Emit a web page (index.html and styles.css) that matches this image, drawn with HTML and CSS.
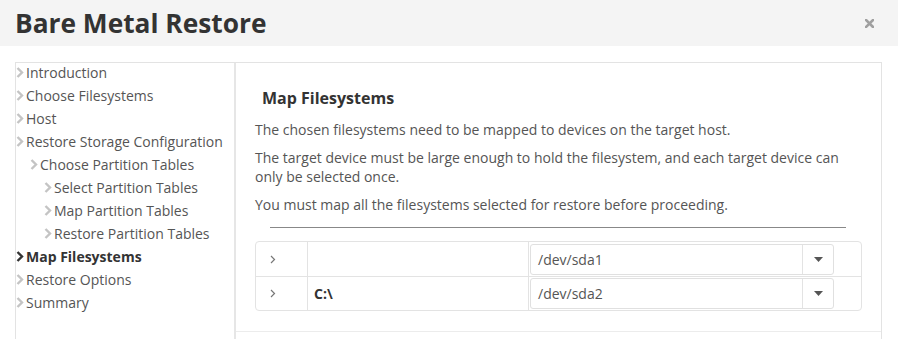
FILE: index.html
```html
<!DOCTYPE html>
<html>
<head>
<meta charset="utf-8">
<link rel="stylesheet" href="styles.css">
</head>
<body>
<div class="header">
  <h1 class="title">Bare Metal Restore</h1>
  <span class="close"><svg width="9" height="9" viewBox="0 0 9 9"><path d="M1 1L8 8M8 1L1 8" stroke="#a0a0a0" stroke-width="2.6" stroke-linecap="square"/></svg></span>
</div>
<div class="frame">
  <ul class="nav">
    <li class="lvl1"><span class="chev"><svg width="8" height="11" viewBox="0 0 8 11"><path d="M1.5 1L6 5.5L1.5 10" fill="none" stroke="currentColor" stroke-width="2.4"/></svg></span>Introduction</li>
    <li class="lvl1"><span class="chev"><svg width="8" height="11" viewBox="0 0 8 11"><path d="M1.5 1L6 5.5L1.5 10" fill="none" stroke="currentColor" stroke-width="2.4"/></svg></span>Choose Filesystems</li>
    <li class="lvl1"><span class="chev"><svg width="8" height="11" viewBox="0 0 8 11"><path d="M1.5 1L6 5.5L1.5 10" fill="none" stroke="currentColor" stroke-width="2.4"/></svg></span>Host</li>
    <li class="lvl1"><span class="chev"><svg width="8" height="11" viewBox="0 0 8 11"><path d="M1.5 1L6 5.5L1.5 10" fill="none" stroke="currentColor" stroke-width="2.4"/></svg></span>Restore Storage Configuration</li>
    <li class="lvl2"><span class="chev"><svg width="8" height="11" viewBox="0 0 8 11"><path d="M1.5 1L6 5.5L1.5 10" fill="none" stroke="currentColor" stroke-width="2.4"/></svg></span>Choose Partition Tables</li>
    <li class="lvl3"><span class="chev"><svg width="8" height="11" viewBox="0 0 8 11"><path d="M1.5 1L6 5.5L1.5 10" fill="none" stroke="currentColor" stroke-width="2.4"/></svg></span>Select Partition Tables</li>
    <li class="lvl3"><span class="chev"><svg width="8" height="11" viewBox="0 0 8 11"><path d="M1.5 1L6 5.5L1.5 10" fill="none" stroke="currentColor" stroke-width="2.4"/></svg></span>Map Partition Tables</li>
    <li class="lvl3"><span class="chev"><svg width="8" height="11" viewBox="0 0 8 11"><path d="M1.5 1L6 5.5L1.5 10" fill="none" stroke="currentColor" stroke-width="2.4"/></svg></span>Restore Partition Tables</li>
    <li class="lvl1 active"><span class="chev"><svg width="8" height="11" viewBox="0 0 8 11"><path d="M1.5 1L6 5.5L1.5 10" fill="none" stroke="currentColor" stroke-width="2.4"/></svg></span>Map Filesystems</li>
    <li class="lvl1"><span class="chev"><svg width="8" height="11" viewBox="0 0 8 11"><path d="M1.5 1L6 5.5L1.5 10" fill="none" stroke="currentColor" stroke-width="2.4"/></svg></span>Restore Options</li>
    <li class="lvl1"><span class="chev"><svg width="8" height="11" viewBox="0 0 8 11"><path d="M1.5 1L6 5.5L1.5 10" fill="none" stroke="currentColor" stroke-width="2.4"/></svg></span>Summary</li>
  </ul>
  <div class="panel">
    <h2 class="heading">Map Filesystems</h2>
    <p class="para">The chosen filesystems need to be mapped to devices on the target host.</p>
    <p class="para">The target device must be large enough to hold the filesystem, and each target device can only be selected once.</p>
    <p class="para">You must map all the filesystems selected for restore before proceeding.</p>
    <hr class="rule">
    <div class="grid">
      <div class="row">
        <div class="cell c1"><svg width="6" height="9" viewBox="0 0 6 9"><path d="M1 1L4.5 4.5L1 8" fill="none" stroke="#777" stroke-width="1.2"/></svg></div>
        <div class="cell c2"></div>
        <div class="cell c3">
          <div class="select"><span class="val">/dev/sda1</span><span class="arrow"><svg width="9" height="5" viewBox="0 0 9 5"><path d="M0 0H9L4.5 5Z" fill="#555"/></svg></span></div>
        </div>
      </div>
      <div class="row">
        <div class="cell c1"><svg width="6" height="9" viewBox="0 0 6 9"><path d="M1 1L4.5 4.5L1 8" fill="none" stroke="#777" stroke-width="1.2"/></svg></div>
        <div class="cell c2"><b>C:\</b></div>
        <div class="cell c3">
          <div class="select"><span class="val">/dev/sda2</span><span class="arrow"><svg width="9" height="5" viewBox="0 0 9 5"><path d="M0 0H9L4.5 5Z" fill="#555"/></svg></span></div>
        </div>
      </div>
    </div>
  </div>
</div>
</body>
</html>
```
FILE: styles.css
```css
* { box-sizing: border-box; }
html, body { margin: 0; padding: 0; background: #fff; }
body { font-family: "Open Sans", "Liberation Sans", sans-serif; color: #555; font-size: 14px; overflow: hidden; height: 100vh; }

.header {
  height: 46px;
  background: #f4f4f4;
  display: flex;
  align-items: center;
  justify-content: space-between;
  padding: 0 24px 0 15px;
}
.title {
  margin: 0;
  font-size: 26.3px;
  font-weight: 700;
  color: #333;
  line-height: 46px;
}
.close { display: flex; align-items: center; }

.frame {
  margin: 16px 16px 0 15px;
  border: 1px solid #e3e3e3;
  border-bottom: none;
  display: flex;
  height: calc(100vh - 62px);
}
.nav {
  list-style: none;
  margin: 0;
  padding: 0;
  width: 220px;
  border-right: 2px solid #e6e6e6;
  flex: none;
}
.nav li {
  height: 23px;
  line-height: 19px;
  padding-bottom: 4px;
  display: flex;
  align-items: center;
  color: #555;
  white-space: nowrap;
}
.nav li .chev { width: 10px; display: flex; align-items: center; color: #c4c4c4; }
.nav li.lvl2 { padding-left: 14px; }
.nav li.lvl3 { padding-left: 28px; }
.nav li.active { font-weight: 700; color: #333; }
.nav li.active .chev { color: #333; }

.panel {
  flex: 1;
  padding: 0 19px 20px 19px;
  border-bottom: 1px solid #ececec;
  align-self: flex-start;
}
.heading {
  margin: 23px 0 10px 7px;
  font-size: 16px;
  font-weight: 700;
  color: #333;
  line-height: 24px;
}
.para {
  margin: 0 0 9px 0;
  line-height: 19px;
  padding-right: 10px;
}
.rule {
  border: none;
  border-top: 1px solid #888;
  margin: 13px 16px 13px 15px;
  height: 0;
}
.grid {
  border: 1px solid #e3e3e3;
  border-radius: 4px;
}
.row { display: flex; height: 34px; }
.row + .row { border-top: 1px solid #e3e3e3; }
.cell { display: flex; align-items: center; }
.c1 { width: 52px; padding-left: 14px; border-right: 1px solid #e3e3e3; flex: none; }
.c2 { width: 221px; padding-left: 6px; border-right: 1px solid #e3e3e3; flex: none; color: #333; font-size: 14px; }
.c3 { flex: 1; padding: 1px 27px 1px 1px; }
.select {
  flex: 1;
  height: 31px;
  border: 1px solid #e0e0e0;
  border-radius: 3px;
  display: flex;
  align-items: stretch;
  color: #555;
}
.select .val { flex: 1; padding-left: 7px; display: flex; align-items: center; }
.select .arrow { width: 31px; border-left: 1px solid #e3e3e3; display: flex; align-items: center; justify-content: center; }
```
